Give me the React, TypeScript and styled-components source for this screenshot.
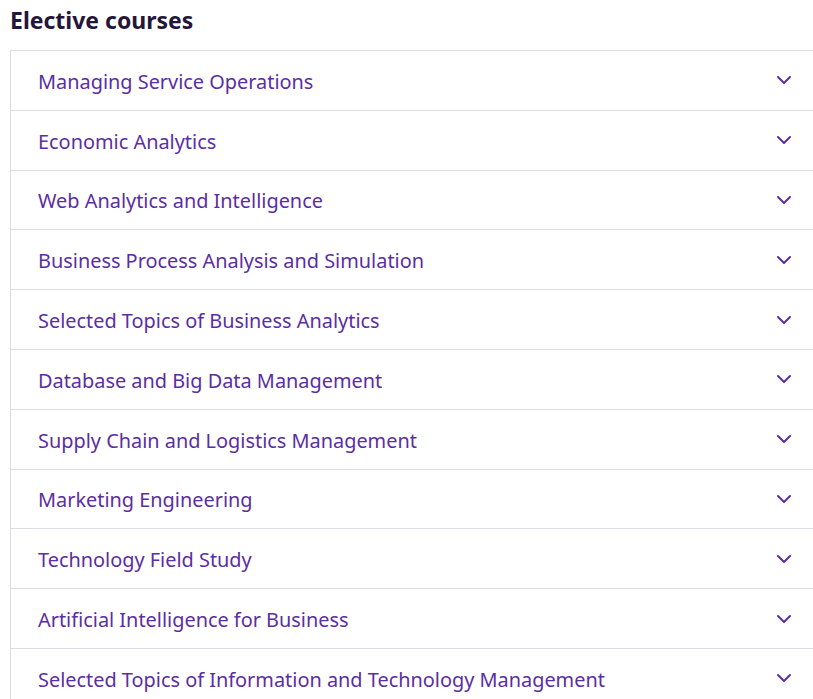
import styled, { createGlobalStyle } from "styled-components";

const GlobalStyle = createGlobalStyle`
  html, body {
    margin: 0;
    padding: 0;
    background: #ffffff;
    overflow: hidden;
  }
  body {
    font-family: "Noto Sans", "Open Sans", sans-serif;
  }
`;

const Page = styled.div`
  width: 813px;
  padding-left: 10px;
  box-sizing: border-box;
`;

const Title = styled.h2`
  margin: 0;
  padding-top: 4px;
  height: 50px;
  box-sizing: border-box;
  font-size: 23px;
  font-weight: 700;
  line-height: 32px;
  color: #24163a;
`;

const List = styled.ul`
  list-style: none;
  margin: 0;
  padding: 0;
  width: 820px;
  border-left: 1px solid #dedbe4;
  border-top: 1px solid #dedbe4;
`;

const Row = styled.li`
  height: 58.8px;
  border-bottom: 1px solid #dedbe4;
  display: flex;
  align-items: center;
  justify-content: space-between;
  padding-left: 27px;
  padding-right: 39px;
  box-sizing: content-box;
  cursor: pointer;
`;

const Name = styled.span`
  font-size: 19.9px;
  color: #5b2ea3;
  padding-top: 2px;
`;

const Chevron = () => (
  <svg width="16" height="10" viewBox="0 0 16 10" fill="none">
    <path
      d="M2 2 L8 8 L14 2"
      stroke="#5b2ea3"
      strokeWidth="2"
      strokeLinecap="round"
      strokeLinejoin="round"
    />
  </svg>
);

const courses = [
  "Managing Service Operations",
  "Economic Analytics",
  "Web Analytics and Intelligence",
  "Business Process Analysis and Simulation",
  "Selected Topics of Business Analytics",
  "Database and Big Data Management",
  "Supply Chain and Logistics Management",
  "Marketing Engineering",
  "Technology Field Study",
  "Artificial Intelligence for Business",
  "Selected Topics of Information and Technology Management",
];

const App = () => {
  return (
    <Page>
      <GlobalStyle />
      <Title>Elective courses</Title>
      <List>
        {courses.map((c) => (
          <Row key={c}>
            <Name>{c}</Name>
            <Chevron />
          </Row>
        ))}
      </List>
    </Page>
  );
};

export default App;
